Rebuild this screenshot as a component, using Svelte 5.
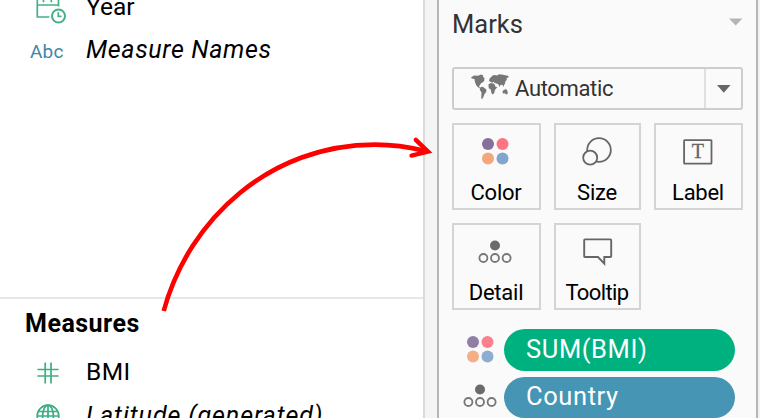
<script>
  const cards = [
    { id: 'color', label: 'Color' },
    { id: 'size', label: 'Size' },
    { id: 'label', label: 'Label' },
    { id: 'detail', label: 'Detail' },
    { id: 'tooltip', label: 'Tooltip' },
  ];
</script>

{#snippet colorDots()}
  <svg width="28" height="28" viewBox="0 0 28 28">
    <circle cx="7" cy="7" r="6" fill="#86719b" />
    <circle cx="21.5" cy="7" r="6" fill="#fb7582" />
    <circle cx="7" cy="21.5" r="6" fill="#f4a77b" />
    <circle cx="21.5" cy="21.5" r="6" fill="#82a5cd" />
  </svg>
{/snippet}

{#snippet detailDots()}
  <svg width="34" height="24" viewBox="0 0 34 24">
    <circle cx="17" cy="5.5" r="5" fill="#6b6b6b" />
    <g fill="none" stroke="#777" stroke-width="1.8">
      <circle cx="5.4" cy="18" r="4" />
      <circle cx="17" cy="18" r="4" />
      <circle cx="28.6" cy="18" r="4" />
    </g>
  </svg>
{/snippet}

<div class="screen">
  <section class="data">
    <div class="dimensions">
      <div class="row">
        <svg class="icon calendar" width="34" height="44" viewBox="0 0 34 44" fill="none" stroke="#43b085" stroke-width="1.7">
          <path d="M26.5 21.5V10H5.3v22h12M5.3 20h21.2M11.5 17.3v-4M19.3 17.3v-4" />
          <circle cx="26.5" cy="31" r="6.5" stroke-width="2" />
          <path d="M26.3 27.2v4.2h3.2" />
        </svg>
        <span class="name year">Year</span>
      </div>
      <div class="row">
        <span class="icon abc">Abc</span>
        <span class="name italic names">Measure Names</span>
      </div>
    </div>
    <div class="measures">
      <h2>Measures</h2>
      <div class="row">
        <svg class="icon hash" width="22" height="22" viewBox="0 0 22 22" fill="none" stroke="#3fae83" stroke-width="1.7">
          <path d="M8.2 .5v21M14 .5v21M.5 7.5h21M.5 14h21" />
        </svg>
        <span class="name bmi">BMI</span>
      </div>
      <div class="row">
        <svg class="icon globe" width="24" height="24" viewBox="0 0 24 24" fill="none" stroke="#3fae83" stroke-width="1.7">
          <circle cx="12" cy="12" r="10.8" />
          <ellipse cx="12" cy="12" rx="5.4" ry="10.8" />
          <path d="M12 1v22M1 12h22M2.5 7.5h19M2.5 17h19" />
        </svg>
        <span class="name italic latitude">Latitude (generated)</span>
      </div>
    </div>
  </section>

  <section class="marks">
    <header>
      <h1>Marks</h1>
      <svg width="14" height="8" viewBox="0 0 14 8"><path d="M0 .5h13.4L6.7 7.5z" fill="#b5b5b5" /></svg>
    </header>

    <div class="select">
      <div class="value">
        <svg width="38" height="26" viewBox="0 0 38 26" fill="#777">
          <path d="M0 3.5 3 1.5l4 .2L10 .5l2.3 1-.3 1.5 1.5 1-.4 3.2-3 2-2 3 .3 1.1 1.2.9-1.3.1-2.6-2.2L4 8.4 3.5 5 .8 4.6z" />
          <path d="m9.3 13.3 2.5-.5 3.6 2.7-.2 2.5-1.7 2.1-1 2.6-1.4 2.5-.8-1 .2-5.7-1.7-2.8z" />
          <path d="m18 7 .6-2.5 3-3L23.8 1l2.4.6L28 .2l4 .5 5.6 1.2-.2 1.5-1.7.5.1 2.1-1.5 1.6-.3 2.4-1.2.9.2 2.1-1.9-2.3-1.6.2-.8 2-1.4-2.7-2.4-.9-1.3-.4-.7-1.2-1.5 1z" />
          <path d="m17.4 10.6 2.1-1.6 3.8.8 1.2 3 1.8.2-2.5 3.3-.5 2.6-1.8 1.7-1.2-1.9-.5-3.3-2-1.2z" />
          <path d="m31.6 17 2-1.5 1-.1.3-.8 1.8 2.8-.1 2.6-1.7.5-1-1.2-2.1.2z" />
        </svg>
        <span>Automatic</span>
      </div>
      <div class="toggle">
        <svg width="14" height="8" viewBox="0 0 14 8"><path d="M0 0h13.6L6.8 7.8z" fill="#666" /></svg>
      </div>
    </div>

    <div class="cards">
      {#each cards as card}
        <div class="card {card.id}">
          <div class="glyph">
            {#if card.id === 'color'}
              {@render colorDots()}
            {:else if card.id === 'size'}
              <svg width="30" height="30" viewBox="0 0 30 30" fill="#fafafa" stroke="#666" stroke-width="1.8">
                <circle cx="17" cy="13" r="11.8" />
                <circle cx="8.2" cy="20.7" r="7" />
              </svg>
            {:else if card.id === 'label'}
              <svg width="30" height="26" viewBox="0 0 30 26" fill="none" stroke="#666" stroke-width="1.8">
                <rect x="1.1" y="1.1" width="27.4" height="23.6" rx=".6" />
                <text x="14.8" y="19.2" text-anchor="middle">T</text>
              </svg>
            {:else if card.id === 'detail'}
              {@render detailDots()}
            {:else}
              <svg width="30" height="28" viewBox="0 0 30 28" fill="none" stroke="#666" stroke-width="1.9">
                <path d="M2 1.4h25.4q.8 0 .8.8v16q0 .8-.8.8H21.3v6.6L15 19H2q-.8 0-.8-.8v-16q0-.8.8-.8z" />
              </svg>
            {/if}
          </div>
          <span class="caption">{card.label}</span>
        </div>
      {/each}
    </div>

    <div class="shelf">
      <div class="entry">
        <div class="kind faded">{@render colorDots()}</div>
        <div class="pill green"><span>SUM(BMI)</span></div>
      </div>
      <div class="entry">
        <div class="kind">{@render detailDots()}</div>
        <div class="pill blue"><span>Country</span></div>
      </div>
    </div>
  </section>

  <svg class="arrow" width="760" height="418" viewBox="0 0 760 418" fill="none" stroke="#fe0000" stroke-width="4.6">
    <path d="M163.7 311C189 218 271 144.6 375 144.6C392 144.6 409 147 425 151" />
    <path d="M411.5 155.6 428 151.6 415.8 139.8" stroke-width="4.4" stroke-linecap="round" />
  </svg>
</div>

<style>
  .screen {
    position: relative;
    display: flex;
    width: 760px;
    height: 418px;
    overflow: hidden;
    background: #f4f4f4;
    font-family: Roboto, "Liberation Sans", sans-serif;
    color: #000;
  }
  svg { display: block; flex: none; }
  .data {
    width: 423px;
    height: 418px;
    border-right: 2px solid #dadada;
    background: #fff;
    white-space: nowrap;
  }
  .dimensions {
    display: flex;
    flex-direction: column;
    box-sizing: border-box;
    height: 299px;
    border-bottom: 2px solid #e6e6e6;
  }
  .row {
    display: flex;
    flex: none;
    align-items: center;
    height: 43px;
    padding-left: 30px;
  }
  .dimensions .row:first-child { margin-top: -15px; }
  .icon { flex: none; }
  .calendar { margin-left: 2px; margin-right: 20px; }
  .year { margin-top: -1px; }
  .hash { margin: 3px 27px 0 7px; }
  .globe { margin: 3px 26px 0 6px; }
  .abc { width: 56px; padding-top: 3px; color: #4086a8; font-size: 19px; letter-spacing: .2px; }
  .name { font-size: 24.5px; }
  .italic { font-size: 25px; font-style: italic; }
  .names { letter-spacing: .65px; }
  .latitude { padding-top: 2px; letter-spacing: .92px; }
  .bmi { letter-spacing: .4px; }
  h1, h2 { margin: 0; }
  h2 {
    height: 48px;
    padding-left: 25px;
    line-height: 50px;
    font-size: 25px;
    font-weight: 700;
    letter-spacing: .5px;
  }
  .measures .row:nth-child(2) { margin-top: 3px; }

  .marks {
    box-sizing: border-box;
    width: 321px;
    height: 418px;
    margin-left: 12px;
    padding: 0 13px;
    border-left: 2px solid #b6b6b6;
    border-right: 2px solid #b6b6b6;
    background: #fafafa;
  }
  header {
    display: flex;
    align-items: center;
    justify-content: space-between;
    height: 67px;
    color: #333;
  }
  h1 { font-size: 25.5px; font-weight: 400; line-height: 50px; margin-top: -20px; }
  header svg { margin-top: -23px; }
  .select {
    box-sizing: border-box;
    display: flex;
    width: 291px;
    height: 43px;
    border: 2px solid #cdcdcd;
    border-radius: 3px;
    color: #333;
  }
  .value { display: flex; flex: 1; align-items: center; padding-left: 17px; gap: 6px; font-size: 22px; letter-spacing: -.35px; }
  .value svg { margin-top: -3px; }
  .value span { margin-top: -1px; }
  .toggle {
    display: flex;
    align-items: center;
    justify-content: center;
    width: 35px;
    border-left: 2px solid #e0e0e0;
  }
  .cards {
    display: grid;
    grid-template-columns: 89px 87px 89px;
    grid-auto-rows: 87px;
    gap: 13px;
    margin-top: 13px;
  }
  .card {
    box-sizing: border-box;
    display: flex;
    flex-direction: column;
    align-items: center;
    border: 2px solid #d4d4d4;
  }
  .glyph { display: flex; align-items: center; justify-content: center; height: 53px; }
  .color .glyph { padding-right: 4px; height: 52px; margin-bottom: 1px; }
  .size .glyph { padding-right: 1px; }
  .label .glyph { padding-right: 2px; }
  .detail .glyph { padding-right: 3px; }
  .glyph text { font: 20px "Liberation Serif", serif; fill: #666; stroke: #666; stroke-width: .3px; }
  .caption { padding-right: 1px; font-size: 22px; line-height: 30px; white-space: nowrap; letter-spacing: -.25px; }
  .tooltip .caption { letter-spacing: -.6px; }
  .shelf { display: flex; flex-direction: column; gap: 6px; margin-top: 19px; }
  .entry { display: flex; height: 41.5px; }
  .kind { display: flex; box-sizing: border-box; align-items: center; justify-content: center; width: 52px; padding-left: 4px; padding-bottom: 2px; }
  .faded { opacity: .9; }
  .pill {
    display: flex;
    align-items: center;
    width: 209px;
    padding-left: 22px;
    border-radius: 21px;
    color: #fff;
    font-size: 25.5px;
    letter-spacing: .6px;
  }
  .pill span { margin-top: -2px; }
  .green { background: #00b180; }
  .blue { background: #4695b4; }
  .arrow { position: absolute; left: 0; top: 0; pointer-events: none; }
</style>
